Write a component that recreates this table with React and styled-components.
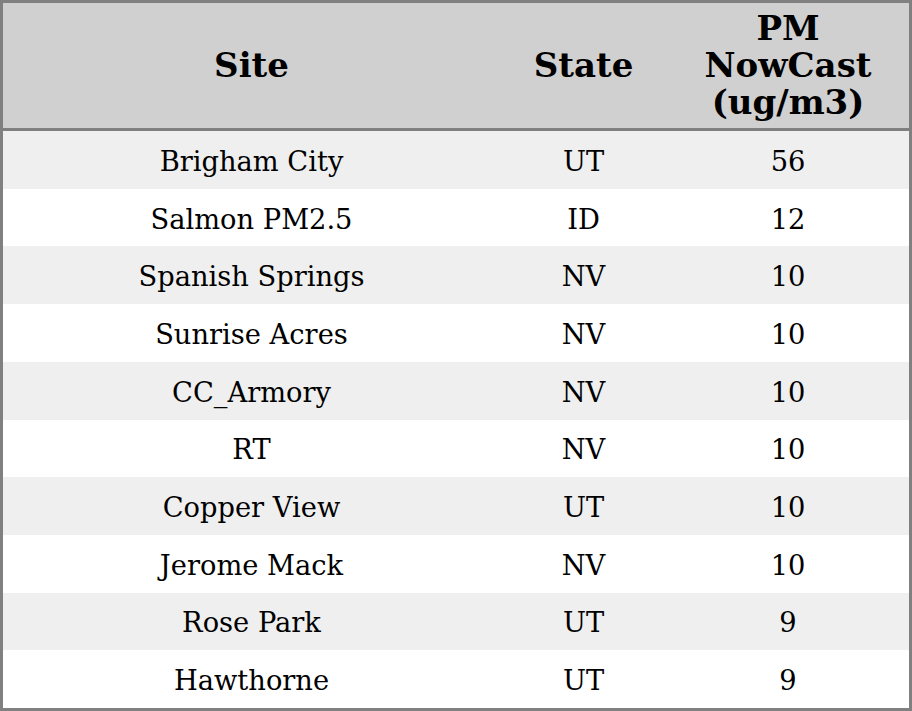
import React from "react";
import styled, { createGlobalStyle } from "styled-components";

const GlobalStyle = createGlobalStyle`
  html, body {
    margin: 0;
    padding: 0;
    background: #ffffff;
  }
`;

const Table = styled.div`
  box-sizing: border-box;
  width: 912px;
  height: 711px;
  border: 3px solid #808080;
  display: grid;
  grid-template-columns: 497px 167px 1fr;
  grid-template-rows: 128px repeat(10, 1fr);
  font-family: "DejaVu Serif", serif;
  color: #000;
`;

const HeadCell = styled.div`
  background: #d0d0d0;
  border-bottom: 3px solid #808080;
  display: flex;
  align-items: center;
  justify-content: center;
  text-align: center;
  font-weight: bold;
  font-size: 34px;
  line-height: 37px;
`;

const Cell = styled.div`
  background: ${(p) => (p.$odd ? "#efefef" : "#ffffff")};
  display: flex;
  align-items: center;
  justify-content: center;
  font-size: 27.3px;
  padding-top: 3px;
`;

const rows = [
  ["Brigham City", "UT", "56"],
  ["Salmon PM2.5", "ID", "12"],
  ["Spanish Springs", "NV", "10"],
  ["Sunrise Acres", "NV", "10"],
  ["CC_Armory", "NV", "10"],
  ["RT", "NV", "10"],
  ["Copper View", "UT", "10"],
  ["Jerome Mack", "NV", "10"],
  ["Rose Park", "UT", "9"],
  ["Hawthorne", "UT", "9"],
];

export default function App() {
  return (
    <>
      <GlobalStyle />
      <Table>
        <HeadCell>Site</HeadCell>
        <HeadCell>State</HeadCell>
        <HeadCell>
          PM
          <br />
          NowCast
          <br />
          (ug/m3)
        </HeadCell>
        {rows.map((r, i) =>
          r.map((v, j) => (
            <Cell key={`${i}-${j}`} $odd={i % 2 === 0}>
              {v}
            </Cell>
          ))
        )}
      </Table>
    </>
  );
}
